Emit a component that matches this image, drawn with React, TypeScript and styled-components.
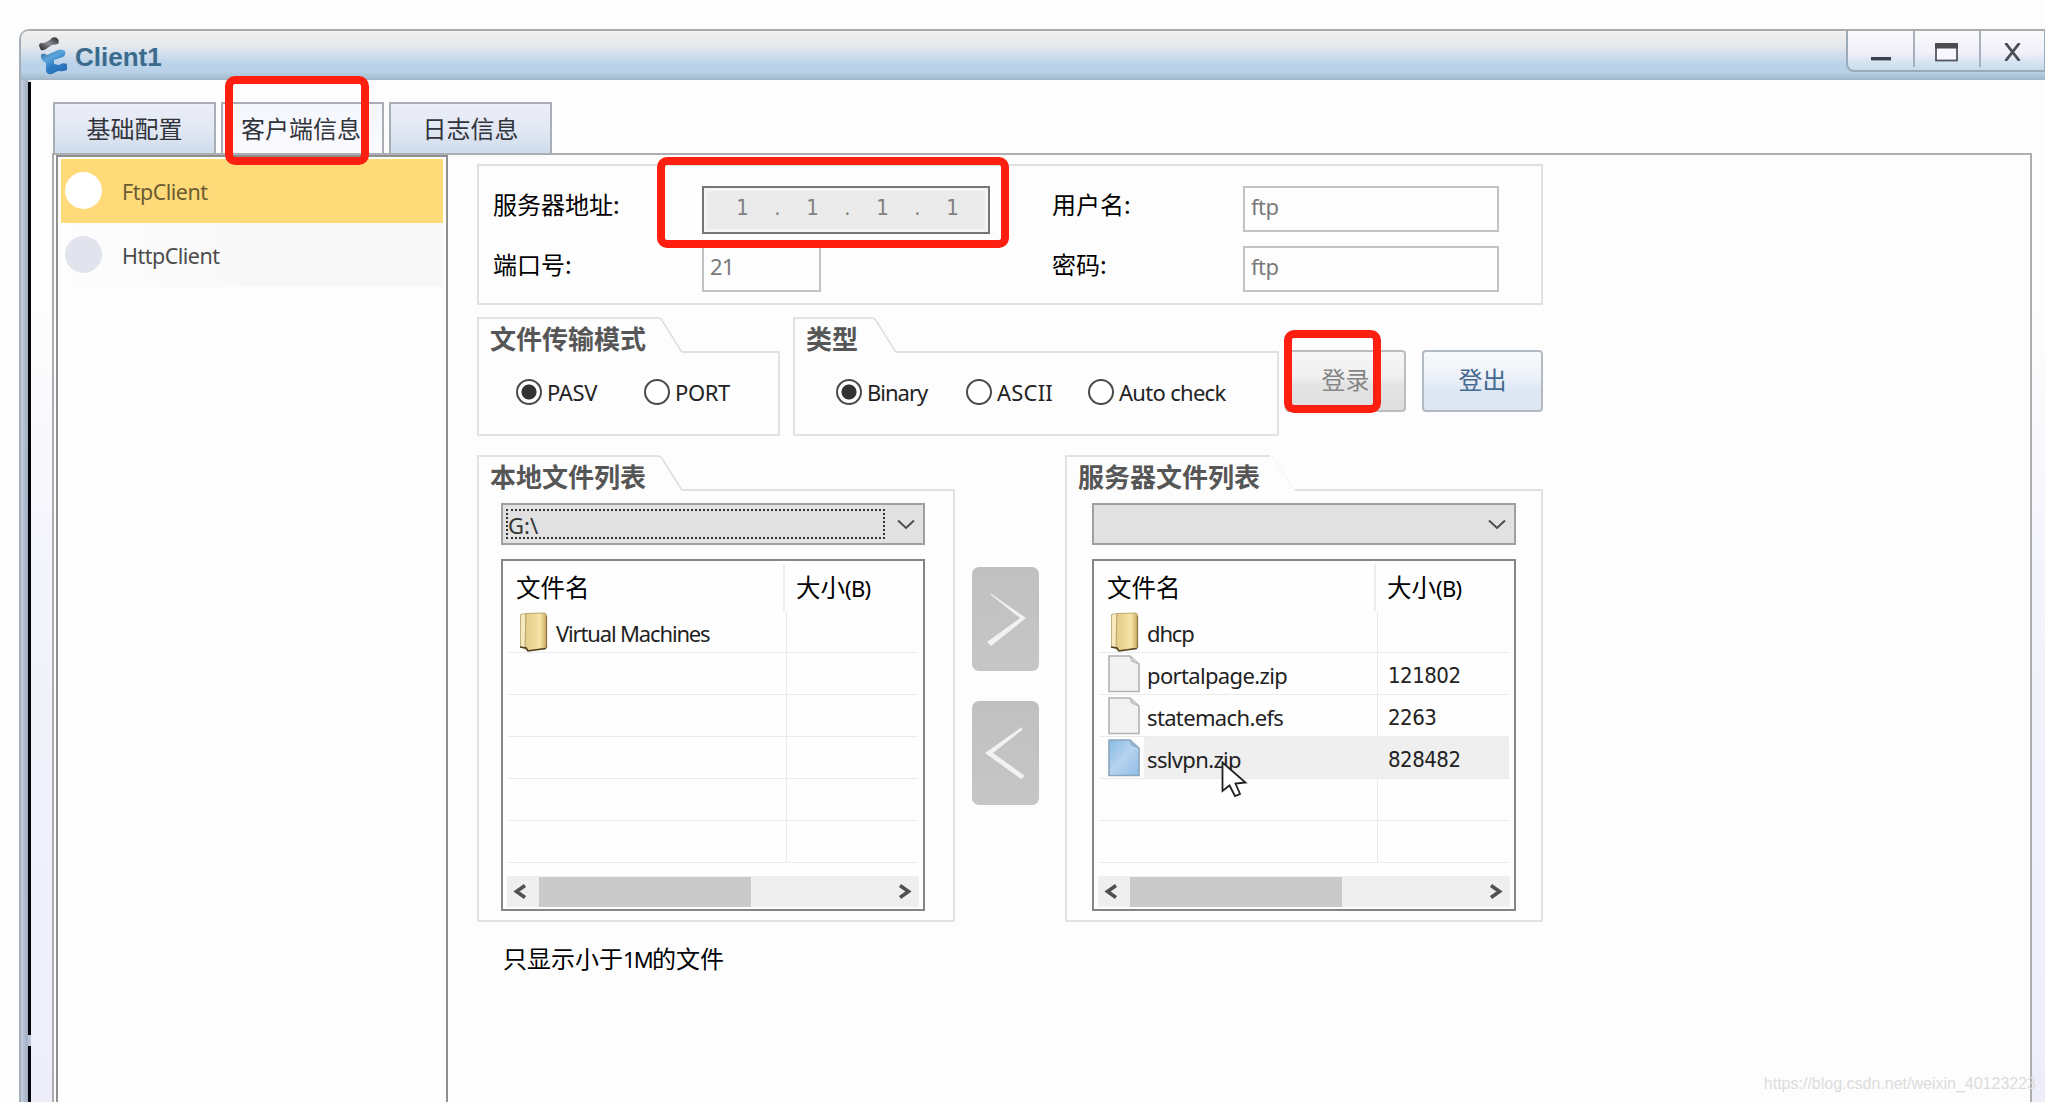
import React from "react";
import styled, {createGlobalStyle, css} from "styled-components";

const GlobalStyle = createGlobalStyle`
  * {
    box-sizing: border-box;
  }

  body {
    margin: 0;
    background: #fdfdfd;
    font-family: "Noto Sans", "Noto Sans CJK SC", sans-serif;
    overflow: hidden;
  }
`

type FileItem = { name: string; size?: string; kind: 'folder' | 'file'; selected?: boolean }

const localFiles: FileItem[] = [
  {name: 'Virtual Machines', kind: 'folder'},
]
const serverFiles: FileItem[] = [
  {name: 'dhcp', kind: 'folder'},
  {name: 'portalpage.zip', size: '121802', kind: 'file'},
  {name: 'statemach.efs', size: '2263', kind: 'file'},
  {name: 'sslvpn.zip', size: '828482', kind: 'file', selected: true},
]
const ROW_COUNT = 6;

const LogoIcon = () => (
  <svg width="30" height="38" viewBox="0 0 30 38">
    <defs>
      <linearGradient id="logoBlue" x1="0" y1="0" x2="0.6" y2="1">
        <stop offset="0" stopColor="#2f5f8c"/>
        <stop offset="0.4" stopColor="#5ba6dc"/>
        <stop offset="0.7" stopColor="#2f7cc2"/>
        <stop offset="1" stopColor="#2a70b8"/>
      </linearGradient>
      <linearGradient id="logoDark" x1="0" y1="1" x2="1" y2="0">
        <stop offset="0" stopColor="#1c1c20"/>
        <stop offset="0.5" stopColor="#8b8d92"/>
        <stop offset="1" stopColor="#26262b"/>
      </linearGradient>
    </defs>
    <path d="M1 9 Q1 5 6 6 L12 3 Q14 -1 19 1 Q22 4 20 7 Q16 8 14 8 L8 12 Q5 14 3 13 Z" fill="url(#logoDark)"/>
    <path
      d="M3 18 Q5 15 9 18 L18 14 Q23 11 27 14 Q28 18 25 20 L16 23 L16 27 L21 28 Q25 25 29 27 L29 33 Q25 35 20 34 L14 37 Q8 38 8 33 L8 26 Q2 23 3 18 Z"
      fill="url(#logoBlue)"/>
  </svg>
)

const FolderIcon = () => (
  <svg width="32" height="40" viewBox="0 0 32 40">
    <defs>
      <linearGradient id="folder" x1="0" y1="0" x2="1" y2="0">
        <stop offset="0" stopColor="#e3cd8d"/>
        <stop offset="0.35" stopColor="#ecd593"/>
        <stop offset="0.7" stopColor="#f5e4a8"/>
        <stop offset="1" stopColor="#c9aa5e"/>
      </linearGradient>
    </defs>
    <path d="M3.5 2.5 L9 1.5 V34 L10 38 L3.5 34.5 Z" fill="#f6e9bd" stroke="#b39d68" strokeWidth="0.8"/>
    <path d="M9 1.5 L28 1 L29.5 3 V36 L11 38.5 L8 34 Z" fill="url(#folder)" stroke="#b0955a" strokeWidth="0.8"/>
    <path d="M3 35 L9 36 L11 39 L29 36.5" fill="none" stroke="#4f4220" strokeWidth="1.6"/>
    <path d="M29.5 4 V36" stroke="#8a7240" strokeWidth="1.2"/>
  </svg>
)

const FileIcon = ({selected}: { selected?: boolean }) => (
  <svg width="32" height="38" viewBox="0 0 32 38">
    <defs>
      <linearGradient id="fileBlue" x1="0" y1="0" x2="1" y2="1">
        <stop offset="0" stopColor="#86bbe6"/>
        <stop offset="0.5" stopColor="#b7d3ee"/>
        <stop offset="1" stopColor="#8fbde8"/>
      </linearGradient>
    </defs>
    <path d="M1 1 H22 L31 9 V36.5 H1 Z" fill={selected ? 'url(#fileBlue)' : '#f3f2f3'}
          stroke={selected ? '#8ba6c0' : '#b4b1b4'} strokeWidth="1.6"/>
    <path d="M22 1 L24 6 L31 9" fill={selected ? '#9db9d3' : '#dcdcde'} stroke={selected ? '#8ba6c0' : '#b4b1b4'}
          strokeWidth="1.2"/>
  </svg>
)

const Chevron = () => (
  <svg width="18" height="11" viewBox="0 0 18 11">
    <path d="M1 1.5 L9 9 L17 1.5" fill="none" stroke="#4d4d4d" strokeWidth="2"/>
  </svg>
)

const ScrollArrow = ({right}: { right?: boolean }) => (
  <svg width="14" height="15" viewBox="0 0 14 15">
    <path d={right ? 'M2 1.5 L10.5 7.5 L2 13.5' : 'M12 1.5 L3.5 7.5 L12 13.5'} fill="none" stroke="#505050"
          strokeWidth="3.6"/>
  </svg>
)

const TransferArrow = ({right}: { right?: boolean }) => (
  <svg width="42" height="54" viewBox="0 0 42 54">
    {right
      ? <path d="M5 1 L41 26 L6 54 L2 50 L35 26 L6 3 Z" fill="#f2f2f2"/>
      : <path d="M37 1 L0 27 L36 53 L40 50 L8 27 L37 4 Z" fill="#f2f2f2"/>}
  </svg>
)

const Cursor = () => (
  <CursorStyled width="28" height="38" viewBox="0 0 28 38">
    <path d="M1.5 1.5 V30 L8.5 24.5 L14 35 L19 33 L14.5 22.5 L24.5 21.5 Z" fill="#fff" stroke="#222"
          strokeWidth="1.8"/>
  </CursorStyled>
)

const TitledGroup = ({title, tabWidth, width, height, faintSlant, children}: {
  title: string; tabWidth: number; width: number; height: number; faintSlant?: boolean; children: React.ReactNode
}) => (
  <GroupStyled $width={width} $height={height}>
    <GroupHeader>
      <GroupTab $width={tabWidth}>{title}</GroupTab>
      <svg width="25" height="36" viewBox="0 0 25 36">
        <path d="M0 1 Q3 1 5 5 L22 32 Q23 35 25 35" fill="none" stroke={faintSlant ? '#f8f8f8' : '#dedede'}
              strokeWidth="1.6"/>
      </svg>
      <GroupRule/>
    </GroupHeader>
    <GroupBody>{children}</GroupBody>
  </GroupStyled>
)

const FileTable = ({files}: { files: FileItem[] }) => (
  <Table>
    <TableHead>
      <HeadName>文件名</HeadName>
      <HeadSize>大小<Latin $track={-0.7}>(B)</Latin></HeadSize>
    </TableHead>
    {Array.from({length: ROW_COUNT}, (_, i) => {
      const file = files[i];
      return (
        <TableRow key={i} $selected={file?.selected}>
          <NameCell $selected={file?.selected}>
            {file && (file.kind === 'folder' ? <FolderIcon/> : <FileIcon selected={file.selected}/>)}
            {file && <FileName $tight={file.kind === 'folder'}>{file.name}</FileName>}
            {file?.selected && <Cursor/>}
          </NameCell>
          <SizeCell>{file?.size}</SizeCell>
        </TableRow>
      )
    })}
    <TableRest/>
    <ScrollBar>
      <ScrollArrow/>
      <ScrollTrack><ScrollThumb/></ScrollTrack>
      <ScrollArrow right/>
    </ScrollBar>
  </Table>
)

const App = () => {
  return (
    <Screen>
      <GlobalStyle/>
      <Window>
        <TitleBar>
          <LogoIcon/>
          <Title>Client1</Title>
          <WindowButtons>
            <WindowButton>
              <svg width="20" height="4"><rect width="20" height="3.4" fill="#3b3f4e"/></svg>
            </WindowButton>
            <WindowButton>
              <svg width="23" height="19" viewBox="0 0 23 19">
                <rect x="1" y="1" width="21" height="16.5" fill="#f7f7fd" stroke="#55565f" strokeWidth="1.8"/>
                <rect width="23" height="5.5" fill="#4b4b52"/>
              </svg>
            </WindowButton>
            <WindowButton>
              <svg width="17" height="18" viewBox="0 0 17 18">
                <path d="M1.5 0 L15.5 18 M15.5 0 L1.5 18" stroke="#4b4d56" strokeWidth="2.8"/>
              </svg>
            </WindowButton>
          </WindowButtons>
        </TitleBar>
        <ClientArea>
          <Frame/>
          <FrameLine><FrameGap/></FrameLine>
          <Body>
            <TabBar>
              <Tab>基础配置</Tab>
              <Tab $active>客户端信息<Mark $x={2} $y={-28} $w={144} $h={89}/></Tab>
              <Tab>日志信息</Tab>
            </TabBar>
            <Panel>
              <ClientList>
                <ClientItem $selected><Dot $selected/>FtpClient</ClientItem>
                <ClientItem><Dot/>HttpClient</ClientItem>
              </ClientList>
              <Main>
                <ServerBox>
                  <FormColumn $width={574}>
                    <FormRow>
                      <FieldLabel $width={209}>服务器地址:</FieldLabel>
                      <IpField>
                        <b>1</b><i>.</i><b>1</b><i>.</i><b>1</b><i>.</i><b>1</b>
                        <Mark $x={-47} $y={-31} $w={352} $h={91}/>
                      </IpField>
                    </FormRow>
                    <FormRow>
                      <FieldLabel $width={209}>端口号:</FieldLabel>
                      <Field $width={119}>21</Field>
                    </FormRow>
                  </FormColumn>
                  <FormColumn>
                    <FormRow>
                      <FieldLabel $width={191}>用户名:</FieldLabel>
                      <Field $width={256}>ftp</Field>
                    </FormRow>
                    <FormRow>
                      <FieldLabel $width={191}>密码:</FieldLabel>
                      <Field $width={256}>ftp</Field>
                    </FormRow>
                  </FormColumn>
                </ServerBox>
                <OptionRow>
                  <TitledGroup title="文件传输模式" tabWidth={181} width={303} height={119}>
                    <RadioRow $left={37}>
                      <RadioItem $width={128}><Radio $checked/>PASV</RadioItem>
                      <RadioItem><Radio/>PORT</RadioItem>
                    </RadioRow>
                  </TitledGroup>
                  <TitledGroup title="类型" tabWidth={79} width={486} height={119}>
                    <RadioRow $left={41}>
                      <RadioItem $width={130} $track={-1}><Radio $checked/>Binary</RadioItem>
                      <RadioItem $width={122} $track={0.2}><Radio/>ASCII</RadioItem>
                      <RadioItem $track={-0.7}><Radio/>Auto check</RadioItem>
                    </RadioRow>
                  </TitledGroup>
                  <ButtonRow>
                    <ActionButton $disabled>登录<Mark $x={-3} $y={-22} $w={97} $h={83}/></ActionButton>
                    <ActionButton>登出</ActionButton>
                  </ButtonRow>
                </OptionRow>
                <FileRow>
                  <TitledGroup title="本地文件列表" tabWidth={181} width={478} height={467}>
                    <ListStack>
                      <ComboBox><Focused>G:\</Focused><Chevron/></ComboBox>
                      <FileTable files={localFiles}/>
                    </ListStack>
                  </TitledGroup>
                  <TransferColumn>
                    <TransferButton><TransferArrow right/></TransferButton>
                    <TransferButton><TransferArrow/></TransferButton>
                  </TransferColumn>
                  <TitledGroup title="服务器文件列表" tabWidth={205} width={478} height={467} faintSlant>
                    <ListStack $server>
                      <ComboBox><Chevron/></ComboBox>
                      <FileTable files={serverFiles}/>
                    </ListStack>
                  </TitledGroup>
                </FileRow>
                <Note>只显示小于<Latin>1M</Latin>的文件</Note>
              </Main>
            </Panel>
          </Body>
        </ClientArea>
      </Window>
      <Watermark>https://blog.csdn.net/weixin_40123223</Watermark>
    </Screen>
  )
}

const Screen = styled.div`
  position: relative;
  width: 2045px;
  height: 1102px;
  padding: 29px 0 0 19px;
  overflow: hidden;
`
const Window = styled.div`
  display: flex;
  flex-direction: column;
  height: 1073px;
  border-top: 2px solid #a9abad;
  border-left: 2px solid #a5adb8;
  border-top-left-radius: 10px;
  overflow: hidden;
`
const TitleBar = styled.div`
  display: flex;
  height: 49px;
  flex-shrink: 0;
  padding: 6px 0 0 17px;
  background: linear-gradient(#f4f4f4 0, #ececec 10%, #e6e9ed 30%, #bcd3e9 66%, #b9d2e9 82%, #abc2d5 94%, #a0b4c5 100%);
`
const Title = styled.div`
  flex-grow: 1;
  margin-left: 7px;
  font: bold 26px/40px "Liberation Sans", Arial, sans-serif;
  color: #3b6b8c;
`
const WindowButtons = styled.div`
  display: flex;
  width: 199px;
  height: 41px;
  margin-top: -6px;
  border: 2px solid #9aaab8;
  border-top: none;
  border-right-width: 1px;
  border-bottom-left-radius: 8px;
  background: linear-gradient(#fafafc, #f1f0fa 55%, #d5e4f1 80%, #c8dbea);
`
const WindowButton = styled.div`
  display: flex;
  justify-content: center;
  width: 66px;
  height: 36px;
  padding-top: 12px;

  &:first-child {
    padding-top: 26px;
  }

  & + & {
    border-left: 2px solid #a9b0ba;
  }
`
const ClientArea = styled.div`
  display: flex;
  flex-grow: 1;
`
const Frame = styled.div`
  width: 7px;
  background: linear-gradient(90deg, #c3cfe0, #9eacbe);
`
const FrameLine = styled.div`
  width: 3px;
  padding-top: 953px;
  background: #04060c;
  border-top: 2px solid #dfe6ec;
`
const FrameGap = styled.div`
  height: 11px;
  background: #b8c8da;
`
const Body = styled.div`
  flex-grow: 1;
  padding-left: 21px;
  background: linear-gradient(#fdfdfd 0, #fdfdfd 22%, #f3f3fc 50%, #eeeefa 100%);
`
const TabBar = styled.div`
  display: flex;
  gap: 5px;
  height: 73px;
  margin-left: -21px;
  padding: 22px 0 0 22px;
  background: #fdfdfd;
`
const Tab = styled.div<{ $active?: boolean }>`
  position: relative;
  width: 163px;
  height: 51px;
  border: 2px solid #a9adb5;
  border-bottom: none;
  background: ${({$active}) => $active ? 'linear-gradient(#f4f6fc, #fbfbfe)' : 'linear-gradient(#eceef8, #e2e8f3 50%, #cfdcec)'};
  font-size: 24px;
  line-height: 47px;
  text-align: center;
  color: #32343c;
  font-family: "Noto Sans CJK SC", sans-serif;
  ${({$active}) => $active && css`
    padding-right: 3px;
  `}
`
const Mark = styled.div<{ $x: number; $y: number; $w: number; $h: number }>`
  position: absolute;
  z-index: 2;
  left: ${({$x}) => $x}px;
  top: ${({$y}) => $y}px;
  width: ${({$w}) => $w}px;
  height: ${({$h}) => $h}px;
  border: 8px solid #ff1f10;
  border-radius: 10px;
`
const Panel = styled.div`
  display: flex;
  width: 1980px;
  height: 960px;
  border: 2px solid #acaeb2;
  background: #fdfdfd;
`
const ClientList = styled.div`
  flex-shrink: 0;
  width: 392px;
  margin-left: 2px;
  padding: 2px 3px;
  border: 2px solid #8f8f8f;
  background: #fdfdfd;
`
const ClientItem = styled.div<{ $selected?: boolean }>`
  display: flex;
  align-items: center;
  height: 64px;
  padding-left: 4px;
  background: ${({$selected}) => $selected ? '#ffda78' : 'linear-gradient(90deg, #fdfdfd, #f8f8f8 50%)'};
  font-size: 21.5px;
  letter-spacing: -0.5px;
  color: ${({$selected}) => $selected ? '#6d5c33' : '#4b4b4b'};
`
const Dot = styled.div<{ $selected?: boolean }>`
  width: 37px;
  height: 37px;
  margin: 0 20px 2px 0;
  border-radius: 50%;
  background: ${({$selected}) => $selected ? '#fff' : '#e1e4ed'};
`
const Main = styled.div`
  padding: 9px 0 0 29px;
`
const ServerBox = styled.div`
  display: flex;
  width: 1066px;
  height: 141px;
  padding: 20px 0 0 14px;
  border: 2px solid #e0e0e0;
`
const FormColumn = styled.div<{ $width?: number }>`
  display: flex;
  flex-direction: column;
  gap: 14px;
  width: ${({$width}) => $width ? `${$width - 15}px` : 'auto'};
`
const FormRow = styled.div`
  display: flex;
  height: 46px;
`
const FieldLabel = styled.div<{ $width: number }>`
  width: ${({$width}) => $width}px;
  font: 24px/36px "Noto Sans CJK SC", sans-serif;
  color: #000;
`
const Field = styled.div<{ $width: number }>`
  width: ${({$width}) => $width}px;
  height: 46px;
  padding-left: 6px;
  border: 2px solid #c2c2c2;
  background: #fdfdfd;
  font-size: 22px;
  line-height: 36px;
  letter-spacing: -0.5px;
  color: #7a7a7a;
`
const IpField = styled.div`
  position: relative;
  display: flex;
  width: 288px;
  height: 48px;
  padding-left: 21px;
  border: 2px solid #757575;
  background: #ebebeb;
  box-shadow: inset 0 0 0 3px #f4f4f4;
  font: 22px/40px "DejaVu Sans Condensed", "DejaVu Sans", sans-serif;
  color: #808080;

  b, i {
    width: 35px;
    font-weight: normal;
    font-style: normal;
    text-align: center;
  }
`
const OptionRow = styled.div`
  display: flex;
  gap: 13px;
  margin-top: 12px;
`
const GroupStyled = styled.div<{ $width: number; $height: number }>`
  display: flex;
  flex-direction: column;
  width: ${({$width}) => $width}px;
  height: ${({$height}) => $height}px;
`
const GroupHeader = styled.div`
  display: flex;
  height: 36px;
  flex-shrink: 0;
`
const GroupTab = styled.div<{ $width: number }>`
  width: ${({$width}) => $width}px;
  padding-left: 11px;
  border-top: 2px solid #e2e2e2;
  border-left: 2px solid #e2e2e2;
  font: bold 26px/38px "Noto Sans CJK SC", sans-serif;
  white-space: nowrap;
  color: #565656;
`
const GroupRule = styled.div`
  flex-grow: 1;
  border-bottom: 2px solid #e0e0e0;
`
const GroupBody = styled.div`
  flex-grow: 1;
  border: 2px solid #e2e2e2;
  border-top: none;
`
const RadioRow = styled.div<{ $left: number }>`
  display: flex;
  padding: 24px 0 0 ${({$left}) => $left}px;
`
const RadioItem = styled.div<{ $width?: number; $track?: number }>`
  display: flex;
  align-items: center;
  gap: 5px;
  width: ${({$width}) => $width ? `${$width}px` : 'auto'};
  height: 30px;
  font-size: 22px;
  letter-spacing: ${({$track = -0.4}) => $track}px;
  white-space: nowrap;
  color: #222;
`
const Radio = styled.div<{ $checked?: boolean }>`
  flex-shrink: 0;
  width: 26px;
  height: 26px;
  border: 2px solid #4a4a4a;
  border-radius: 50%;
  background: ${({$checked}) => $checked ? 'radial-gradient(circle, #333 0 7px, #fff 8px)' : '#fff'};
`
const ButtonRow = styled.div`
  display: flex;
  gap: 16px;
  padding-top: 33px;
  margin-left: -7px;
`
const ActionButton = styled.div<{ $disabled?: boolean }>`
  position: relative;
  width: 121px;
  height: 62px;
  border: 2px solid ${({$disabled}) => $disabled ? '#bdbdbd' : '#b4bac2'};
  border-radius: 4px;
  background: ${({$disabled}) => $disabled
          ? 'linear-gradient(#f7f7f7, #efefef 45%, #e4e4e4 55%, #dedede)'
          : 'linear-gradient(#f8f9fb, #eff2f8 40%, #dde8f5 65%, #dde5f1)'};
  font: 24px/54px "Noto Sans CJK SC", sans-serif;
  text-align: center;
  color: ${({$disabled}) => $disabled ? '#858585' : '#45698f'};
`
const FileRow = styled.div`
  display: flex;
  margin-top: 19px;
`
const ListStack = styled.div<{ $server?: boolean }>`
  display: flex;
  flex-direction: column;
  gap: 14px;
  padding: 12px 0 0 ${({$server}) => $server ? 25 : 22}px;
`
const ComboBox = styled.div`
  display: flex;
  align-items: center;
  justify-content: flex-end;
  width: 424px;
  height: 42px;
  padding: 0 8px 0 3px;
  border: 2px solid #a0a0a0;
  background: #e1e1e1;
`
const Focused = styled.div`
  width: 379px;
  height: 30px;
  margin-right: auto;
  border: 2px dotted #333;
  font-size: 22px;
  line-height: 29px;
  color: #333;
`
const Table = styled.div`
  display: flex;
  flex-direction: column;
  width: 424px;
  height: 352px;
  border: 2px solid #858585;
  background: #fefefe;
`
const TableHead = styled.div`
  display: flex;
  height: 50px;
  padding-top: 3px;
  font: 24.5px/45px "Noto Sans CJK SC", sans-serif;
  color: #000;
`
const HeadName = styled.div`
  width: 282px;
  padding-left: 13px;
  border-right: 2px solid #ececec;
`
const HeadSize = styled.div`
  padding-left: 11px;
`
const Latin = styled.span<{ $track?: number }>`
  font-family: "Noto Sans", sans-serif;
  font-size: 22px;
  letter-spacing: ${({$track = -1.8}) => $track}px;
`
const TableRow = styled.div<{ $selected?: boolean }>`
  display: flex;
  height: 42px;
  margin: 0 5px;
  border-bottom: 1px solid #ebebeb;
  ${({$selected}) => $selected && css`
    background: linear-gradient(90deg, #fefefe 44px, #efefef 46px);
  `}
`
const NameCell = styled.div<{ $selected?: boolean }>`
  position: relative;
  display: flex;
  align-items: center;
  gap: 7px;
  width: 279px;
  padding-left: 9px;
  border-right: 1px solid ${({$selected}) => $selected ? 'transparent' : '#e9e9e9'};
`
const FileName = styled.span<{ $tight?: boolean }>`
  padding-top: 2px;
  font-size: 22px;
  line-height: 40px;
  letter-spacing: ${({$tight}) => $tight ? -1.15 : -0.65}px;
  color: #222;
`
const CursorStyled = styled.svg`
  position: absolute;
  left: 122px;
  top: 24px;
`
const SizeCell = styled.div`
  padding: 2px 0 0 10px;
  font: 22px/42px "DejaVu Sans Condensed", "DejaVu Sans", sans-serif;
  letter-spacing: -0.5px;
  color: #222;
`
const TableRest = styled.div`
  flex-grow: 1;
`
const ScrollBar = styled.div`
  display: flex;
  align-items: center;
  height: 31px;
  margin: 0 4px 2px;
  padding: 0 7px 0 6px;
  background: #efefef;
`
const ScrollTrack = styled.div`
  flex-grow: 1;
  padding-left: 12px;
`
const ScrollThumb = styled.div`
  width: 212px;
  height: 30px;
  background: #cacaca;
`
const TransferColumn = styled.div`
  display: flex;
  flex-direction: column;
  gap: 30px;
  padding: 112px 26px 0 17px;
`
const TransferButton = styled.div`
  display: flex;
  align-items: center;
  justify-content: center;
  width: 67px;
  height: 104px;
  border-radius: 7px;
  background: linear-gradient(#c0c0c0, #c6c6c6);
`
const Note = styled.div`
  margin: 16px 0 0 26px;
  font: 24px/40px "Noto Sans CJK SC", sans-serif;
  color: #000;
`
const Watermark = styled.div`
  position: absolute;
  right: 9px;
  bottom: 8px;
  font: 16px/20px "Liberation Sans", Arial, sans-serif;
  color: #dcdcdc;
`

export default App;
